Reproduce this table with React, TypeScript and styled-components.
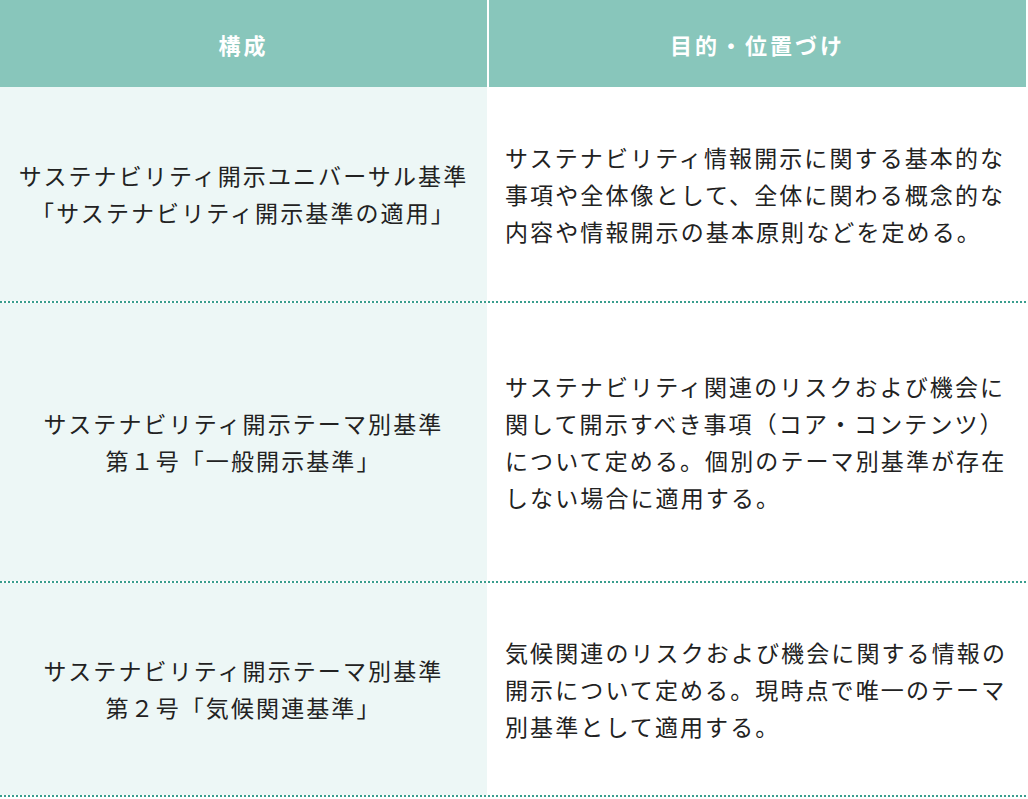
import styled, { createGlobalStyle } from 'styled-components';

const GlobalStyle = createGlobalStyle`
    html, body { margin: 0; padding: 0; background: #ffffff; }
    body {
        font-family: "Noto Sans CJK JP", "Noto Sans", sans-serif;
        color: #222222;
    }
`

type Row = { title: string[], body: string[], height: number }

const rows: Row[] = [
    {
        title: ['サステナビリティ開示ユニバーサル基準', '「サステナビリティ開示基準の適用」'],
        body: ['サステナビリティ情報開示に関する基本的な', '事項や全体像として、全体に関わる概念的な', '内容や情報開示の基本原則などを定める。'],
        height: 214,
    },
    {
        title: ['サステナビリティ開示テーマ別基準', '第１号「一般開示基準」'],
        body: ['サステナビリティ関連のリスクおよび機会に', '関して開示すべき事項（コア・コンテンツ）', 'について定める。個別のテーマ別基準が存在', 'しない場合に適用する。'],
        height: 278,
    },
    {
        title: ['サステナビリティ開示テーマ別基準', '第２号「気候関連基準」'],
        body: ['気候関連のリスクおよび機会に関する情報の', '開示について定める。現時点で唯一のテーマ', '別基準として適用する。'],
        height: 212,
    },
]

export default function App() {
    return (
        <>
            <GlobalStyle />
            <Table>
                <Header>
                    <HeadCell>構成</HeadCell>
                    <HeadCell>目的・位置づけ</HeadCell>
                </Header>
                {rows.map((row, i) => (
                    <BodyRow key={i} $height={row.height}>
                        <TitleCell>
                            {row.title.map((line, j) => <Line key={j}>{line}</Line>)}
                        </TitleCell>
                        <TextCell>
                            {row.body.map((line, j) => <Line key={j}>{line}</Line>)}
                        </TextCell>
                    </BodyRow>
                ))}
            </Table>
        </>
    )
}

const Table = styled.div`
    width: 1026px;
    display: flex;
    flex-direction: column;
`

const Header = styled.div`
    display: grid;
    grid-template-columns: 487px 1fr;
    column-gap: 2px;
    height: 87px;
`

const HeadCell = styled.div`
    background: #88c6bb;
    color: #ffffff;
    font-weight: 700;
    font-size: 22px;
    letter-spacing: 3px;
    display: flex;
    align-items: center;
    justify-content: center;
`

const BodyRow = styled.div<{ $height: number }>`
    display: grid;
    grid-template-columns: 487px 1fr;
    column-gap: 2px;
    height: ${p => p.$height}px;
    border-bottom: 2px dotted #3a9e8e;
`

const TitleCell = styled.div`
    background: #edf7f6;
    display: flex;
    flex-direction: column;
    align-items: center;
    justify-content: center;
    text-align: center;
    font-size: 23px;
    line-height: 37px;
    letter-spacing: 2.1px;
`

const TextCell = styled.div`
    display: flex;
    flex-direction: column;
    justify-content: center;
    padding-left: 16px;
    font-size: 23px;
    line-height: 37px;
    letter-spacing: 2.1px;
`

const Line = styled.div`
    white-space: nowrap;
`
